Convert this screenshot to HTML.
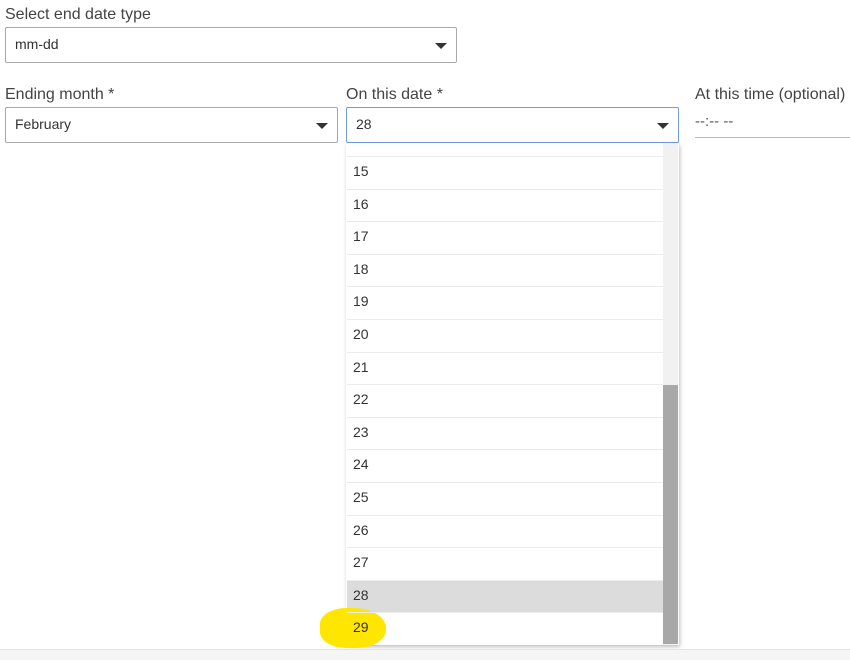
<!DOCTYPE html>
<html><head><meta charset="utf-8"><style>
body{margin:0;width:850px;height:659px;background:#fff;font-family:"Liberation Sans",sans-serif;position:relative;overflow:hidden;color:#333}
.a{position:absolute}
.lbl{font-size:16px;color:#444}
.sel{position:absolute;border:1px solid #a9a9a9;border-radius:2px;box-sizing:border-box;background:#fff;font-size:14px;color:#333}
.sel span{position:absolute;left:9px;top:8px}
.tri{position:absolute;width:0;height:0;border-left:6px solid transparent;border-right:6px solid transparent;border-top:6px solid #333}
.row{position:absolute;left:347px;width:316px;height:32px;border-top:1px solid #ececec;font-size:14px;color:#333;box-sizing:border-box}
.row span{position:absolute;left:6px;top:6px}
</style></head><body>
<div class="a lbl" style="left:5px;top:6px">Select end date type</div>
<div class="sel" style="left:5px;top:27px;width:452px;height:36px"><span>mm-dd</span><div class="tri" style="left:429px;top:15px"></div></div>
<div class="a lbl" style="left:5px;top:86px">Ending month *</div>
<div class="sel" style="left:5px;top:107px;width:333px;height:36px"><span>February</span><div class="tri" style="left:310px;top:15px"></div></div>
<div class="a lbl" style="left:346px;top:86px">On this date *</div>
<div class="sel" style="left:346px;top:107px;width:333px;height:36px;border-color:#6f9be0"><span>28</span><div class="tri" style="left:310px;top:15px"></div></div>
<div class="a lbl" style="left:695px;top:86px">At this time (optional)</div>
<div class="a" style="left:695px;top:113px;font-size:15px;color:#555">--:-- --</div>
<div class="a" style="left:695px;top:137px;width:155px;height:1px;background:#bbb"></div>
<div class="a" style="left:346px;top:143px;width:333px;height:502px;background:#fff;box-shadow:1px 2px 4px rgba(0,0,0,.25)"></div>
<div class="a" style="left:663px;top:143px;width:15px;height:502px;background:#f1f1f1"></div>
<div class="a" style="left:663px;top:385px;width:15px;height:259px;background:#a8a8a8"></div>
<div class="row" style="top:156px"><span>15</span></div>
<div class="row" style="top:188.6px"><span>16</span></div>
<div class="row" style="top:221.2px"><span>17</span></div>
<div class="row" style="top:253.8px"><span>18</span></div>
<div class="row" style="top:286.4px"><span>19</span></div>
<div class="row" style="top:319px"><span>20</span></div>
<div class="row" style="top:351.6px"><span>21</span></div>
<div class="row" style="top:384.2px"><span>22</span></div>
<div class="row" style="top:416.8px"><span>23</span></div>
<div class="row" style="top:449.4px"><span>24</span></div>
<div class="row" style="top:482px"><span>25</span></div>
<div class="row" style="top:514.6px"><span>26</span></div>
<div class="row" style="top:547.2px"><span>27</span></div>
<div class="row" style="top:579.8px;background:#dcdcdc"><span>28</span></div>
<div class="a" style="left:320px;top:608px;width:66px;height:40px;background:#ffe600;border-radius:40% 50% 45% 40%"></div>
<div class="row" style="top:612.4px;background:transparent"><span>29</span></div>
<div class="a" style="left:0;top:649px;width:850px;height:10px;background:#f5f5f5;border-top:1px solid #e4e4e4"></div>
</body></html>
